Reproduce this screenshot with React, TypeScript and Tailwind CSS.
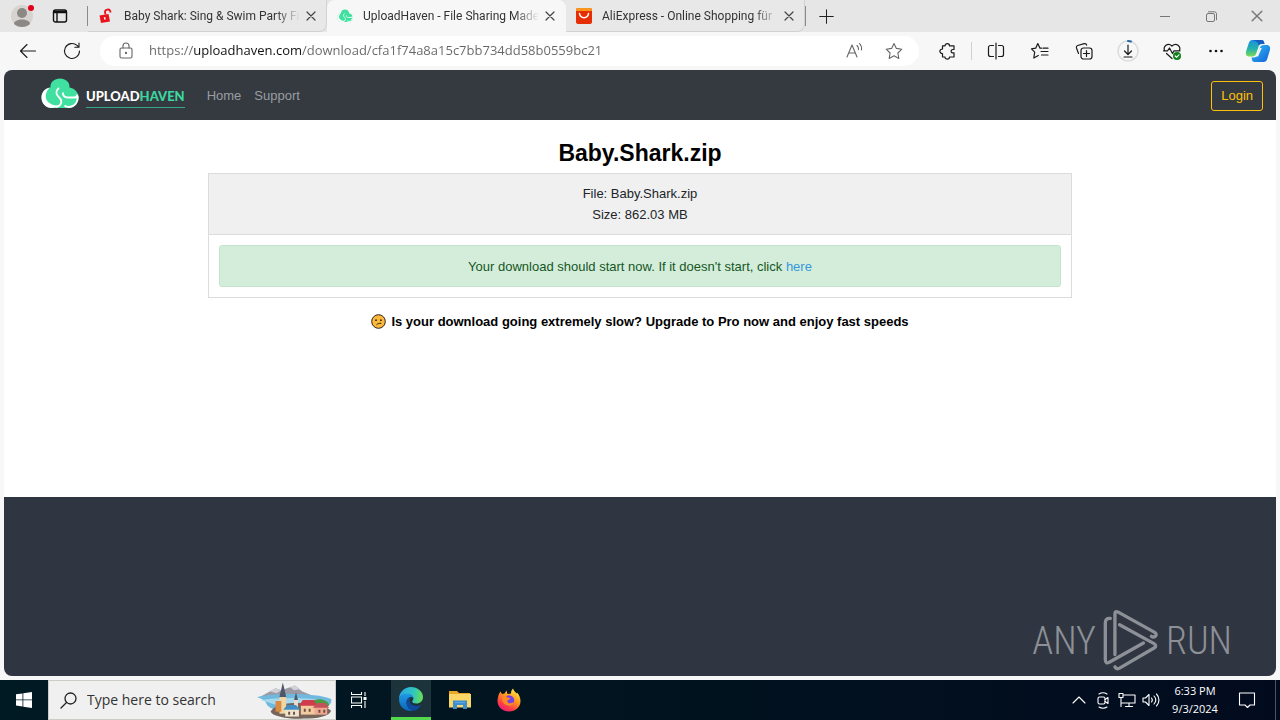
import React from 'react';
import { clsx } from 'clsx';

interface Tab {
  title: string;
  icon: React.ReactNode;
  active?: boolean;
}

const stroke = {
  fill: 'none',
  stroke: 'currentColor',
  strokeLinecap: 'round' as const,
  strokeLinejoin: 'round' as const,
};

const Icon = ({ children, size = 20, width = 1.1 }: { children: React.ReactNode; size?: number; width?: number }) => (
  <svg width={size} height={size} viewBox="0 0 20 20" strokeWidth={width} {...stroke} aria-hidden="true">
    {children}
  </svg>
);

const Cross = ({ size = 10 }: { size?: number }) => (
  <svg width={size} height={size} viewBox="0 0 10 10" strokeWidth="1.2" {...stroke} aria-hidden="true">
    <path d="M1 1l8 8M9 1L1 9" />
  </svg>
);

const CloudLogo = ({ className }: { className?: string }) => (
  <svg className={className} viewBox="0 0 38 32" aria-hidden="true">
    <path d="M9.500 9.500C9 4 13.500.5 19 .5s10 3.500 9.500 9c5.500 1 9 5 9 10 0 6-4.500 10.500-10 10.500h-17C5 30 .5 25.500.5 19.500c0-5 3.500-9 9-10z" fill="#3fe0a0" />
    <path d="M9 9.500C3.500 10.500.5 14.500.5 19.500.5 25.500 5 30 10.500 30c4 0 7.500-1 9.500-3-3 .8-6 .6-9-.6C6 24.500 4 20.500 5 16c.6-2.600 2-4.800 4-6.500z" fill="#fff" />
    <path d="M18 10c-2.500 2-3.200 5-1.500 7.500 1.800 2.500 4.500 4 3.800 7-.6 2.500-3 4-5.300 4.500" fill="none" stroke="#fff" strokeWidth="1.800" />
    <path d="M22 14.500c-.3 3 1.500 5 4.500 5h7c1.800 0 2.700-1 2.700-3M36.500 18c1 6-3 11-8.500 11-2 0-3.500-.5-4.500-1.500" fill="none" stroke="#fff" strokeWidth="2" />
  </svg>
);

const LockFavicon = () => (
  <svg width="16" height="16" viewBox="0 0 16 16" aria-hidden="true">
    <path d="M1.500 7.500l9-1.500 1.500 7.500-9 1.500z" fill="#e8131d" />
    <path d="M7.500 6.500L7 4C6.700 1.500 11.500.5 12.200 3l.4 1.500" fill="none" stroke="#e8131d" strokeWidth="1.800" />
    <path d="M6.400 9.200l.8 2.400" stroke="#fff" strokeWidth="1.500" />
  </svg>
);

const AliFavicon = () => (
  <svg width="16" height="16" viewBox="0 0 16 16" aria-hidden="true">
    <rect width="16" height="16" rx="2" fill="#e62e04" />
    <path d="M0 3V2a2 2 0 012-2h12a2 2 0 012 2v1z" fill="#f7971d" />
    <path d="M3.500 5.500c.8 5.500 8.200 5.500 9 0" fill="none" stroke="#fff" strokeWidth="1.500" strokeLinecap="round" />
  </svg>
);

const CopilotLogo = () => (
  <svg width="26" height="24" viewBox="0 0 26 24" aria-hidden="true">
    <defs>
      <linearGradient id="cpA" x1="0" y1="0" x2="0" y2="1">
        <stop offset="0" stopColor="#1b8fe0" />
        <stop offset=".55" stopColor="#25b3a8" />
        <stop offset="1" stopColor="#7fd957" />
      </linearGradient>
      <linearGradient id="cpB" x1="0" y1="0" x2="1" y2="1">
        <stop offset="0" stopColor="#2fc0f5" />
        <stop offset="1" stopColor="#1560d8" />
      </linearGradient>
    </defs>
    <path d="M7.500 1h9c2 0 2.500 1.500 3 4h-3c-1.800 0-2.500 1-3 2.800L11 15c-.6 1.600-1.500 2.500-3.500 2.500H4.500C1 17.500.3 15 1.200 12L3.800 4C4.500 2 5.500 1 7.500 1z" fill="url(#cpA)" />
    <path d="M18.500 23h-9c-2 0-2.500-1.500-3-4.500h2.300c2 0 3-1 3.600-2.800L15 8.500C15.600 7 16.500 6 18.500 6h3c3.500 0 4.200 2.500 3.300 5.500L22.200 20c-.6 2-1.700 3-3.700 3z" fill="url(#cpB)" />
    <path d="M7.500 1h9c2 0 2.500 1.500 3 4h-3c-1.200 0-2 .5-2.500 1.500C13 3.500 11 1.500 7.500 1z" fill="#165cc0" />
    <path d="M14.800 9h2L13 17.500h-2z" fill="#f7f7f7" />
  </svg>
);

const ConfusedFace = () => (
  <svg className="size-[15px]" viewBox="0 0 15 15" role="img" aria-label="Confused face">
    <circle cx="7.500" cy="7.500" r="6.800" fill="#fcb93c" stroke="#2b2115" strokeWidth="1" />
    <circle cx="5" cy="6.200" r=".9" fill="#2b2115" />
    <circle cx="9.900" cy="6.200" r=".9" fill="#2b2115" />
    <path d="M5.500 10.800c1-1.200 2.800-1.600 4.800-1.500" fill="none" stroke="#2b2115" strokeWidth="1" />
  </svg>
);

const EdgeLogo = () => (
  <svg width="26" height="26" viewBox="0 0 26 26" aria-hidden="true">
    <defs>
      <linearGradient id="edA" x1="0" y1=".3" x2="1" y2=".4">
        <stop offset="0" stopColor="#2aa4e8" />
        <stop offset=".6" stopColor="#30c6c0" />
        <stop offset="1" stopColor="#66df53" />
      </linearGradient>
      <linearGradient id="edB" x1="0" y1="0" x2="0" y2="1">
        <stop offset="0" stopColor="#1f9be5" />
        <stop offset="1" stopColor="#0c63b8" />
      </linearGradient>
    </defs>
    <path d="M1 13C1 6 6.500 1 13 1s12 4.500 12 10c0 4-3 6.500-6.500 6.500-3 0-4.300-1-4.300-2 0-.8 1.200-1.300 1.200-3 0-2.500-2.600-4.500-6-4.500C5 8 1.800 10 1 13z" fill="url(#edA)" />
    <path d="M1 13c.8-3.500 4-5.200 8-5.200 3.500 0 6.200 2 6.400 4.500-.8-1-1.700-1.300-2.600-1.200-2.500.2-4.300 2.400-4.300 5.200 0 4.500 3.500 8.300 8 8.300C8 26.500 1 21.500 1 13z" fill="url(#edB)" />
    <path d="M8.500 16.300c0-2.800 1.800-5 4.300-5.200-1 1-1.300 2-1.300 3.200 0 3.500 3 5.700 6.700 5.700 2 0 3.600-.6 5-1.500-1.700 3.700-4.700 6.100-7.700 6.100-4 0-7-3.800-7-8.300z" fill="#11499a" />
  </svg>
);

const FolderLogo = () => (
  <svg width="24" height="20" viewBox="0 0 24 20" aria-hidden="true">
    <path d="M1 1h8l2 2h11v4H1z" fill="#e9a825" />
    <path d="M1 4h22v13.500H1z" fill="#fbd768" />
    <path d="M5 10.500h14V19h-4v-4H9v4H5z" fill="#3c8fd0" />
    <path d="M7 12.500h10" stroke="#5aa5dc" strokeWidth="1" />
  </svg>
);

const FirefoxLogo = () => (
  <svg width="24" height="24" viewBox="0 0 24 24" aria-hidden="true">
    <defs>
      <linearGradient id="ffA" x1=".8" y1="0" x2=".2" y2="1">
        <stop offset="0" stopColor="#fff04a" />
        <stop offset=".4" stopColor="#ff9a1f" />
        <stop offset=".75" stopColor="#ff3b47" />
        <stop offset="1" stopColor="#e31587" />
      </linearGradient>
    </defs>
    <path d="M3.500 3.500L5 6l2.500-.5L9.500 2.500l1 3.500 3.500-.5c0-2 .5-3.500 2-5 1 2.500 2.500 3.500 3.500 5l.5-1c2.200 2 3.500 5.500 3.500 8.500 0 6-5 10.500-11.500 10.500S.5 19 .5 13c0-3.500 1-7 3-9.500z" fill="url(#ffA)" />
    <circle cx="12" cy="12.500" r="5.200" fill="#7542e5" />
    <path d="M5.500 8.500c2-.8 4-.3 5.500 1.200L13.500 10c-.5 1.500-2 1.800-3 2.200-.5 2 1 3.300 3 3 1.500-.2 2.500-.8 3.500-.5-1 3-5 4-8 2.300-3-1.500-4.500-5-3.500-8.500z" fill="#ff8a20" />
  </svg>
);

const TownArt = () => (
  <svg className="h-[38px] w-[78px] shrink-0" viewBox="0 0 80 38" aria-hidden="true">
    <path d="M3 16L19 7l6 2 14-5 7 6 10 4z" fill="#9b9aa5" />
    <path d="M13 10l6-3 6 2-5 3zM34 6l5-2 5 4-6 1z" fill="#d3d0d8" />
    <path d="M0 16c14-4 60-5 76 2 2 7-8 10-14 10H16C6 24 14 21 0 16z" fill="#6fb9df" />
    <path d="M4 19c18-3 48-3 68 1l-20 4H20z" fill="#a6d8ee" />
    <path d="M14 31c2-5 12-9 24-9s30 0 38 8c-2 6-14 8-28 8-14 1-32-2-34-7z" fill="#75655a" />
    <path d="M54 21c8-5 18-3 20 3l-4 5H54z" fill="#4d9a45" />
    <path d="M23 16h7v17h-7z" fill="#f0d6a4" />
    <path d="M23 16l3.500-15L30 16z" fill="#4e5668" />
    <path d="M19 20h6v11h-6z" fill="#d98a43" />
    <path d="M38 19h4v8h-4z" fill="#e9dccb" />
    <path d="M38 19l2-8 2 8z" fill="#4e5668" />
    <path d="M45 24h15v10H45z" fill="#f3c9a0" />
    <path d="M43 25l4-6h11l4 6z" fill="#cf3b4a" />
    <path d="M59 26h13v8H59z" fill="#f0a890" />
    <path d="M57 27l5-5h8l4 5z" fill="#c4525a" />
    <path d="M29 28h14v8H29z" fill="#efe4cd" />
    <path d="M27 29l4-5h9l4 5z" fill="#3f8fc4" />
    <path d="M32 31h2v3h-2zM37 31h2v3h-2zM48 28h2v3h-2zM53 28h2v3h-2zM63 29h2v3h-2zM68 29h2v3h-2z" fill="#6b4f45" />
  </svg>
);

const TABS: Tab[] = [
  { title: 'Baby Shark: Sing & Swim Party Fr', icon: <LockFavicon /> },
  { title: 'UploadHaven - File Sharing Made', icon: <CloudLogo className="h-3.5 w-4" />, active: true },
  { title: 'AliExpress - Online Shopping für', icon: <AliFavicon /> },
];

const TabItem = ({ title, icon, active }: Tab) => (
  <div
    className={clsx(
      'flex min-w-0 basis-[239px] items-center border-r pl-2.5 pr-2.5',
      active ? 'rounded-t-lg border-[#f7f7f7] bg-[#f7f7f7]' : 'rounded-br-lg border-b border-[#d2d2d2] bg-[#e8e8e8]'
    )}
  >
    <span className="flex w-4 shrink-0 justify-center">{icon}</span>
    <span className="ml-2.5 min-w-0 flex-1 overflow-hidden whitespace-nowrap font-[Roboto,sans-serif] text-xs text-[#333] [mask-image:linear-gradient(to_right,black_86%,transparent)]">
      {title}
    </span>
    <button aria-label="Close tab" className="ml-1.5 shrink-0 text-[#444]">
      <Cross />
    </button>
  </div>
);

const WindowControls = () => (
  <div className="ml-auto flex text-[#777]">
    <button aria-label="Minimize" className="flex w-[46px] items-center justify-center">
      <svg width="10" height="10" viewBox="0 0 10 10" strokeWidth="1" {...stroke}>
        <path d="M0 5.500h10" />
      </svg>
    </button>
    <button aria-label="Restore" className="flex w-[46px] items-center justify-center">
      <svg width="11" height="11" viewBox="0 0 11 11" strokeWidth="1" {...stroke}>
        <rect x=".5" y="2.500" width="8" height="8" rx="1.500" />
        <path d="M2.500.8h6a2 2 0 012 2v6" />
      </svg>
    </button>
    <button aria-label="Close" className="flex w-[46px] items-center justify-center">
      <Cross size={12} />
    </button>
  </div>
);

const TabBar = () => (
  <div className="flex h-8 bg-[#e6e6e6]">
    <div className="flex w-[88px] shrink-0 items-center">
      <button aria-label="Profile" className="ml-2.5">
        <svg width="26" height="26" viewBox="0 0 26 26">
          <circle cx="12" cy="13" r="11" fill="#d6d3d0" />
          <circle cx="12" cy="10" r="5" fill="#8c8884" />
          <path d="M4 21c0-6 16-6 16 0-4 4-12 4-16 0z" fill="#8c8884" />
          <circle cx="21" cy="5" r="3" fill="#e3001b" />
        </svg>
      </button>
      <button aria-label="Tab actions" className="ml-4">
        <svg width="16" height="16" viewBox="0 0 16 16" fill="none" stroke="#111" strokeWidth="1.400">
          <rect x="1.500" y="2" width="13" height="12" rx="2" />
          <path d="M1.500 4h13" strokeWidth="2.500" />
          <path d="M5 5v9" />
        </svg>
      </button>
      <span className="ml-auto h-5 w-px bg-[#8a8a8a]" />
    </div>
    {TABS.map((tab) => (
      <TabItem key={tab.title} {...tab} />
    ))}
    <button aria-label="New tab" className="flex items-center pr-3 text-[#222]">
      <span className="mr-3 h-5 w-px bg-[#8a8a8a]" />
      <Icon size={17} width={1.2}>
        <path d="M10 2v16M2 10h16" />
      </Icon>
    </button>
    <WindowControls />
  </div>
);

const ToolButton = ({ label, children }: { label: string; children: React.ReactNode }) => (
  <button aria-label={label} className="flex w-11 shrink-0 items-center justify-center text-[#1a1a1a]">
    {children}
  </button>
);

const Toolbar = () => (
  <div className="flex h-[38px] bg-[#f7f7f7] pl-1.5 pr-0.5">
    <ToolButton label="Back">
      <Icon>
        <path d="M17.500 10H2.500M9 3.500L2.500 10 9 16.500" />
      </Icon>
    </ToolButton>
    <ToolButton label="Refresh">
      <Icon>
        <path d="M17.500 10a7.500 7.500 0 11-2.500-5.600L17 6.200M17 2v4.200h-4.200" />
      </Icon>
    </ToolButton>
    <div className="mx-1.5 my-1 flex min-w-0 flex-1 items-center rounded-full bg-white pl-2.5 pr-[5px] text-[#666]">
      <button aria-label="Site information" className="flex w-8 justify-center">
        <Icon>
          <rect x="4" y="7" width="12" height="10" rx="1.500" />
          <path d="M7 7V5a3 3 0 016 0v2" />
          <circle cx="10" cy="12" r=".6" fill="currentColor" />
        </Icon>
      </button>
      <input
        type="text"
        aria-label="Address"
        defaultValue="https://uploadhaven.com/download/cfa1f74a8a15c7bb734dd58b0559bc21"
        className="ml-[7px] min-w-0 flex-1 bg-[linear-gradient(to_right,#666_45px,#111_45px,#111_152px,#666_152px)] bg-clip-text text-[13px] text-transparent outline-none"
      />
      <button aria-label="Read aloud" className="flex w-10 justify-center">
        <Icon>
          <path d="M3 16L8 4l5 12M4.800 12h6.400M13 4.500a5 5 0 011.500 4M15.500 2.500a8 8 0 012 6.500" />
        </Icon>
      </button>
      <button aria-label="Add to favorites" className="flex w-10 justify-center">
        <Icon>
          <path d="M10 2.500l2.400 4.900 5.400.8-3.900 3.800.9 5.400-4.800-2.600-4.800 2.600.9-5.400-3.900-3.800 5.400-.8z" />
        </Icon>
      </button>
    </div>
    <ToolButton label="Extensions">
      <Icon width={1.2}>
        <path d="M5.500 4.800H8c0-3 4.500-3 4.500 0H17v3.700h-1.200a1.700 1.700 0 000 3.400H17V16h-4.500c0 2.800-4.500 2.800-4.500 0H5.500v-3.500c-3.500 0-3.500-4.500 0-4.500z" />
      </Icon>
    </ToolButton>
    <span className="mx-0.5 my-2.5 w-px bg-[#d0d0d0]" />
    <ToolButton label="Split screen">
      <Icon width={1.2}>
        <path d="M10 2v16M7.500 4.500H4.500a2 2 0 00-2 2v7a2 2 0 002 2h3M12.500 4.500h3a2 2 0 012 2v7a2 2 0 01-2 2h-3" />
      </Icon>
    </ToolButton>
    <ToolButton label="Favorites">
      <Icon width={1.2}>
        <path d="M11.500 7.200H10L7.800 2.500 5.700 7.200l-4.200.7 3.200 3.300-.9 5.800 4.500-2.500M13 7.200h5M11 10.500h7M11.500 14H18" />
      </Icon>
    </ToolButton>
    <ToolButton label="Collections">
      <Icon width={1.2}>
        <rect x="7" y="7" width="11" height="11" rx="2.500" />
        <path d="M12.500 9.500v6M9.500 12.500h6M4.500 12.500l-2-5.500c-.4-1.200.2-2.200 1.200-2.500l6.500-1.800c1.200-.3 2.200.3 2.500 1.500" />
      </Icon>
    </ToolButton>
    <ToolButton label="Downloads">
      <svg width="24" height="24" viewBox="0 0 24 24" strokeWidth="1.200" {...stroke}>
        <circle cx="12" cy="12" r="10" stroke="#dcdcdc" strokeWidth="1.500" />
        <path d="M12 2c1 0 2 .2 3 .5" stroke="#2564a8" strokeWidth="2" />
        <path d="M12 6v9.500M8.500 12l3.500 3.500 3.500-3.500M8 18h8" />
      </svg>
    </ToolButton>
    <ToolButton label="Browser essentials">
      <Icon width={1.2}>
        <path d="M2.500 9.500C1 5.500 5.500 1 10 5c4.500-4 9 .5 7.500 4.500M4.500 12.500L10 17.500M1.500 9.800h4L7.500 7l3 5.500L12 9.800h6" />
        <circle cx="15" cy="15" r="4" fill="#10801a" stroke="none" />
        <path d="M13.200 15l1.400 1.300 2.300-2.500" stroke="#fff" />
      </Icon>
    </ToolButton>
    <ToolButton label="Settings and more">
      <svg width="16" height="4" viewBox="0 0 16 4" fill="#111">
        <circle cx="2.500" cy="2" r="1.300" />
        <circle cx="8" cy="2" r="1.300" />
        <circle cx="13.500" cy="2" r="1.300" />
      </svg>
    </ToolButton>
    <button aria-label="Copilot" className="flex w-10 shrink-0 items-center justify-center">
      <CopilotLogo />
    </button>
  </div>
);

const SiteHeader = () => (
  <header className="flex h-[50px] items-center bg-[#343a40] pt-0.5 pl-[37px] pr-[13px]">
    <a href="#home" className="flex items-center">
      <CloudLogo className="mb-1 h-8 w-[38px]" />
      <span className="ml-[7px] border-b border-[#36a887] font-[Lato,sans-serif] leading-[22px] font-black text-white">
        UPLOAD<span className="text-[#3dd6a0]">HAVEN</span>
      </span>
    </a>
    <nav className="ml-[22px] flex gap-[13px] text-[#9a9da0]">
      <a href="#home">Home</a>
      <a href="#support">Support</a>
    </nav>
    <button className="ml-auto h-[30px] rounded-[3px] border border-[#ffc107] px-[9px] text-[#ffc107]">Login</button>
  </header>
);

const DownloadPage = () => (
  <main className="flex-1 px-5 pt-[18px] text-center">
    <h1 className="text-[23px] leading-[30px] font-bold text-black">Baby.Shark.zip</h1>
    <section className="mx-auto mt-[5px] max-w-[864px] border border-[#dcdcdc]">
      <div className="border-b border-[#dcdcdc] bg-[#f0f0f0] py-[9px] leading-[21px] text-[#212529]">
        <p>File: Baby.Shark.zip</p>
        <p>Size: 862.03 MB</p>
      </div>
      <div className="p-2.5">
        <p className="rounded-[3px] border border-[#c3e6cb] bg-[#d4edda] pt-[11px] pb-[9px] leading-5 text-[#155724]">
          Your download should start now. If it doesn't start, click{' '}
          <a href="#download" className="text-[#3498db]">
            here
          </a>
        </p>
      </div>
    </section>
    <p className="mt-[13px] flex items-center justify-center gap-[5px] leading-[21px] font-bold text-black">
      <ConfusedFace />
      Is your download going extremely slow? Upgrade to Pro now and enjoy fast speeds
    </p>
  </main>
);

const Watermark = () => (
  <div className="flex items-center gap-1.5 font-['Roboto_Condensed',Roboto,sans-serif] text-[38px] leading-none font-light text-[#8d9097]">
    <span>ANY</span>
    <svg width="58" height="65" viewBox="265 25 175 195" strokeWidth="10" {...stroke} aria-hidden="true">
      <path d="M290 56q-15-2-15 14V180q0 14 12 8L390 130" />
      <path d="M304 165V42q0-10 10-5L424 98q8 6 2 12-6 4-12 0" />
      <path d="M318 75L422 132q10 7 0 13L318 206q-9 5-14-4" />
    </svg>
    <span>RUN</span>
  </div>
);

const TrayButton = ({ label, children }: { label: string; children: React.ReactNode }) => (
  <button aria-label={label} className="flex w-6 items-center justify-center">
    <Icon>{children}</Icon>
  </button>
);

const Taskbar = () => (
  <footer className="flex h-10 bg-linear-to-r from-[#001a24] via-[#01131f] to-[#020b1e] text-white">
    <button aria-label="Start" className="flex w-12 shrink-0 items-center justify-center">
      <svg width="16" height="16" viewBox="0 0 16 16" fill="#fff">
        <path d="M0 2.300l6.500-.9v6.100H0zM7.300 1.300L16 0v7.500H7.300zM0 8.300h6.500v6.100L0 13.500zM7.300 8.300H16V16l-8.700-1.300z" />
      </svg>
    </button>
    <label className="flex w-72 items-center border border-[#c9cdc6] bg-[#f0f0f0] pl-[11px] text-[#222]">
      <svg width="17" height="17" viewBox="0 0 17 17" strokeWidth="1.300" {...stroke} aria-hidden="true">
        <circle cx="10.500" cy="6.500" r="5.500" />
        <path d="M6.500 10.500L1 16" />
      </svg>
      <input
        type="text"
        aria-label="Search"
        placeholder="Type here to search"
        className="ml-2.5 min-w-0 flex-1 text-sm outline-none placeholder:text-[#333]"
      />
      <TownArt />
    </label>
    <div className="flex gap-[9px]">
      <button aria-label="Task view" className="flex w-[46px] items-center justify-center">
        <svg width="16" height="16" viewBox="0 0 16 16" fill="none" stroke="#fff" strokeWidth="1.100">
          <path d="M.5 0v2.500h10V0M.5 16v-2.500h10V16M.5 5h10v6H.5zM14 0v4M14 9v7" />
          <path d="M12.500 5h3v3h-3z" fill="#fff" stroke="none" />
        </svg>
      </button>
      <button aria-label="Microsoft Edge" className="flex w-10 items-center justify-center border-b-3 border-[#52d94c] bg-[#1d333c]">
        <EdgeLogo />
      </button>
      <button aria-label="File Explorer" className="flex w-10 items-center justify-center">
        <FolderLogo />
      </button>
      <button aria-label="Firefox" className="flex w-10 items-center justify-center">
        <FirefoxLogo />
      </button>
    </div>
    <div className="ml-auto flex">
      <TrayButton label="Show hidden icons">
        <path d="M4 13l6-6 6 6" />
      </TrayButton>
      <TrayButton label="Camera">
        <rect x="5" y="7" width="7" height="7" rx="1.500" />
        <path d="M12 9.500l3-2v6l-3-2M6 4c2.500-1.500 5.500-1.500 8 0M6 17c2.500 1.500 5.500 1.500 8 0" />
      </TrayButton>
      <TrayButton label="Network">
        <path d="M7 5h11v8H5M12 13v3.500M8.500 16.500h7M2 3.500h4v4H2zM4 7.500v9" />
      </TrayButton>
      <TrayButton label="Volume">
        <path d="M2 8h2.500L8 4.500v11L4.500 12H2zM10.500 8c1 1.200 1 2.800 0 4M13 6c2.200 2.400 2.200 5.600 0 8M15.500 4c3.300 3.500 3.300 8.500 0 12" />
      </TrayButton>
      <div className="flex w-16 flex-col justify-center text-center text-[11px] leading-[18px]">
        <span>6:33 PM</span>
        <span>9/3/2024</span>
      </div>
      <button aria-label="Notifications" className="flex w-10 items-center justify-center">
        <Icon>
          <path d="M2.500 3h15v12H13l-2.500 2.500L8 15H2.500z" />
        </Icon>
      </button>
      <button aria-label="Show desktop" className="ml-2 w-[5px] border-l border-[#4a5563]" />
    </div>
  </footer>
);

export default function App() {
  return (
    <div className="flex min-h-screen flex-col bg-[#f7f7f7] font-['Open_Sans','Noto_Sans',sans-serif]">
      <TabBar />
      <Toolbar />
      <div className="mx-1 mb-1 flex flex-1 flex-col overflow-hidden rounded-lg bg-white font-['Liberation_Sans',Arial,sans-serif] text-[13px]">
        <SiteHeader />
        <DownloadPage />
        <div className="flex min-h-[179px] items-end justify-end bg-[#303641] pb-[3px] pr-11">
          <Watermark />
        </div>
      </div>
      <Taskbar />
    </div>
  );
}
